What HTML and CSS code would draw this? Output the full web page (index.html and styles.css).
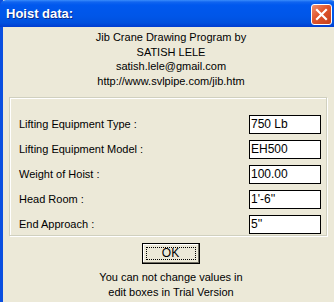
FILE: index.html
```html
<!DOCTYPE html>
<html lang="en">
<head>
    <meta charset="UTF-8">
    <title>Hoist data</title>
    <link rel="stylesheet" href="styles.css">
</head>
<body>
    <div class="window">
        <div class="titlebar">
            <span class="title">Hoist data:</span>
            <button class="close-button" aria-label="Close">
                <svg width="13" height="13" viewBox="0 0 13 13">
                    <path d="M2 2 L11 11 M11 2 L2 11" stroke="#fff" stroke-width="2.2" stroke-linecap="square"/>
                </svg>
            </button>
        </div>
        <div class="client">
            <div class="about">
                <p>Jib Crane Drawing Program by</p>
                <p>SATISH LELE</p>
                <p>satish.lele@gmail.com</p>
                <p>http://www.svlpipe.com/jib.htm</p>
            </div>
            <div class="groupbox">
                <div class="field-row">
                    <label>Lifting Equipment Type :</label>
                    <div class="edit-box">750 Lb</div>
                </div>
                <div class="field-row">
                    <label>Lifting Equipment Model :</label>
                    <div class="edit-box">EH500</div>
                </div>
                <div class="field-row">
                    <label>Weight of Hoist :</label>
                    <div class="edit-box">100.00</div>
                </div>
                <div class="field-row">
                    <label>Head Room :</label>
                    <div class="edit-box">1'-6''</div>
                </div>
                <div class="field-row">
                    <label>End Approach :</label>
                    <div class="edit-box">5''</div>
                </div>
            </div>
            <div class="actions">
                <button class="ok-button"><span>OK</span></button>
            </div>
            <div class="notice">
                <p>You can not change values in</p>
                <p>edit boxes in Trial Version</p>
            </div>
        </div>
    </div>
</body>
</html>
```

FILE: styles.css
```css
* {
    margin: 0;
    padding: 0;
    box-sizing: border-box;
}

body {
    width: 334px;
    height: 302px;
    overflow: hidden;
    background: #ece9d8;
    font-family: 'Liberation Sans', Arial, sans-serif;
    font-size: 11px;
    color: #000;
}

/* Window frame */
.window {
    width: 337px;
    height: 302px;
    border-left: 3px solid #0a4fe0;
    background: #ece9d8;
}

.titlebar {
    height: 27px;
    margin-left: -3px;
    display: flex;
    align-items: center;
    justify-content: space-between;
    padding: 0 5px 0 6px;
    background: linear-gradient(to bottom, #3a8cfb 0px, #1165f0 2px, #0058ee 5px, #0056e8 60%, #0050de 85%, #003cd0 100%);
    border-radius: 6px 6px 0 0;
}

.title {
    font-family: 'Liberation Sans', Arial, sans-serif;
    font-weight: bold;
    font-size: 13px;
    color: #fff;
    text-shadow: 1px 1px 0 #0a2c8c;
}

.close-button {
    width: 21px;
    height: 21px;
    margin-top: 2px;
    border: 1px solid #fff;
    border-radius: 3px;
    background: linear-gradient(135deg, #f09070, #e0552c 45%, #c5401c);
    display: flex;
    align-items: center;
    justify-content: center;
}

/* Client area */
.client {
    padding: 3px 0 0 0;
}

.about {
    text-align: center;
    line-height: 14.7px;
    padding-left: 2px;
}

.groupbox {
    margin: 8px 10px 0 6px;
    height: 139px;
    border: 1px solid #d0d0bf;
    box-shadow: inset 1px 1px 0 #fff, 1px 1px 0 #fff;
    padding: 17px 5px 0 9px;
    display: flex;
    flex-direction: column;
    gap: 6px;
}

.field-row {
    display: flex;
    justify-content: space-between;
    align-items: center;
    height: 19px;
}

.edit-box {
    width: 72px;
    height: 19px;
    background: #fff;
    border: 1px solid #000;
    padding: 0 0 0 1px;
    font-size: 12px;
    line-height: 17px;
}

.actions {
    display: flex;
    justify-content: center;
    margin-top: 7px;
    padding-left: 1px;
}

.ok-button {
    width: 58px;
    height: 21px;
    background: #ece9d8;
    border: 1px solid #000;
    box-shadow: inset -1px -1px 0 #716f64, inset 1px 1px 0 #fff;
    font-family: 'Liberation Sans', Arial, sans-serif;
    font-size: 12px;
    padding: 3px;
}

.ok-button span {
    display: block;
    height: 100%;
    border: 1px dotted #000;
    line-height: 11px;
}

.notice {
    text-align: center;
    line-height: 15px;
    margin-top: 6px;
    padding-left: 2px;
}
```
